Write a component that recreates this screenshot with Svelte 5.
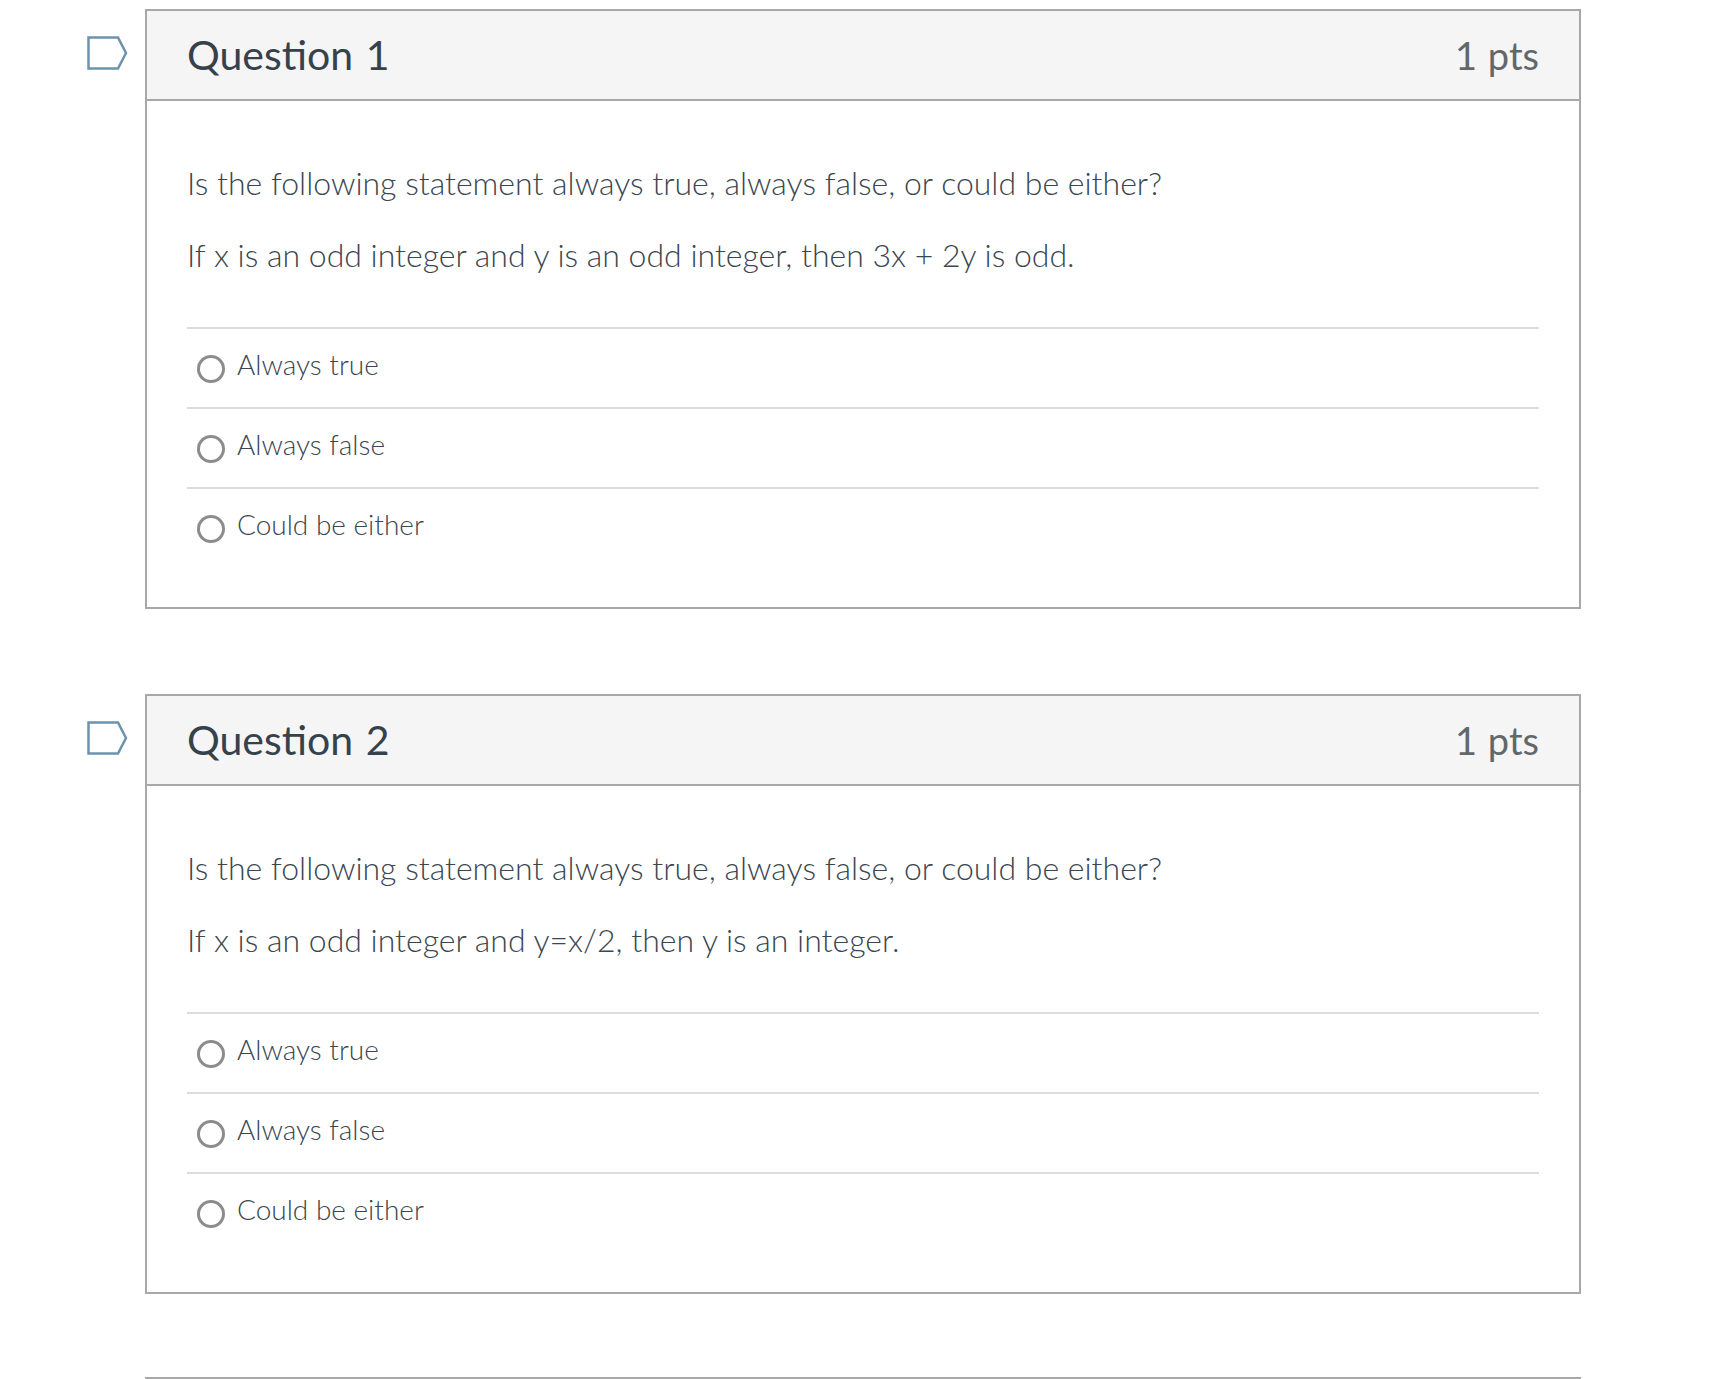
<script>
	const options = ['Always true', 'Always false', 'Could be either'];
	const questions = [
		{ title: 'Question 1', text: 'If x is an odd integer and y is an odd integer, then 3x + 2y is odd.' },
		{ title: 'Question 2', text: 'If x is an odd integer and y=x/2, then y is an integer.' }
	];
</script>

<div class="page">
	{#each questions as q}
		<div class="question">
			<svg class="flag" width="41" height="34" viewBox="0 0 41 34">
				<path d="M1.5 1.5H31L39 17L31 32.5H1.5Z" fill="none" stroke="#6d92ad" stroke-width="2.5" />
			</svg>
			<div class="card">
				<div class="header">
					<span class="title">{q.title}</span>
					<span class="pts">1 pts</span>
				</div>
				<div class="body">
					<p>Is the following statement always true, always false, or could be either?</p>
					<p>{q.text}</p>
				</div>
				<div class="answers">
					{#each options as opt}
						<div class="answer">
							<span class="radio"></span>
							<span class="label">{opt}</span>
						</div>
					{/each}
				</div>
			</div>
		</div>
	{/each}
	<div class="rule"></div>
</div>

<style>
	:global(body) {
		margin: 0;
		background: #fff;
	}
	.page {
		height: 1379px;
		padding: 9px 0 0 145px;
		box-sizing: border-box;
		width: 1581px;
		font-family: Lato, 'Liberation Sans', sans-serif;
		overflow: hidden;
	}
	.question {
		position: relative;
		margin-bottom: 85px;
	}
	.flag {
		position: absolute;
		left: -58px;
		top: 27px;
	}
	.card {
		border: 2px solid #a8a8a8;
		height: 600px;
		box-sizing: border-box;
	}
	.header {
		height: 90px;
		box-sizing: border-box;
		background: #f5f5f5;
		border-bottom: 2px solid #a8a8a8;
		padding: 0 40px;
		display: flex;
		justify-content: space-between;
		align-items: center;
	}
	.title {
		font-size: 41px;
		word-spacing: 2px;
		color: #35424c;
		margin-top: -1px;
	}
	.pts {
		font-size: 38px;
		word-spacing: 1px;
		color: #62676b;
	}
	.body {
		padding: 62px 40px 0;
		height: 226px;
		box-sizing: border-box;
		font-size: 32px;
		font-weight: 300;
		color: #3a4650;
	}
	.body p {
		margin: 0 0 32px;
		line-height: 40px;
	}
	.answers {
		margin: 0 40px;
	}
	.answer {
		height: 80px;
		box-sizing: border-box;
		border-top: 2px solid #dcdcdc;
		display: flex;
		align-items: center;
		padding-left: 10px;
		gap: 12px;
	}
	.radio {
		width: 28px;
		height: 28px;
		box-sizing: border-box;
		border: 3.5px solid #8c8c8c;
		border-radius: 50%;
		margin-top: 1px;
	}
	.label {
		font-size: 28px;
		font-weight: 300;
		color: #3a4650;
		padding-bottom: 8px;
	}
	.rule {
		border-top: 2px solid #a8a8a8;
		margin-top: -2px;
	}
</style>
